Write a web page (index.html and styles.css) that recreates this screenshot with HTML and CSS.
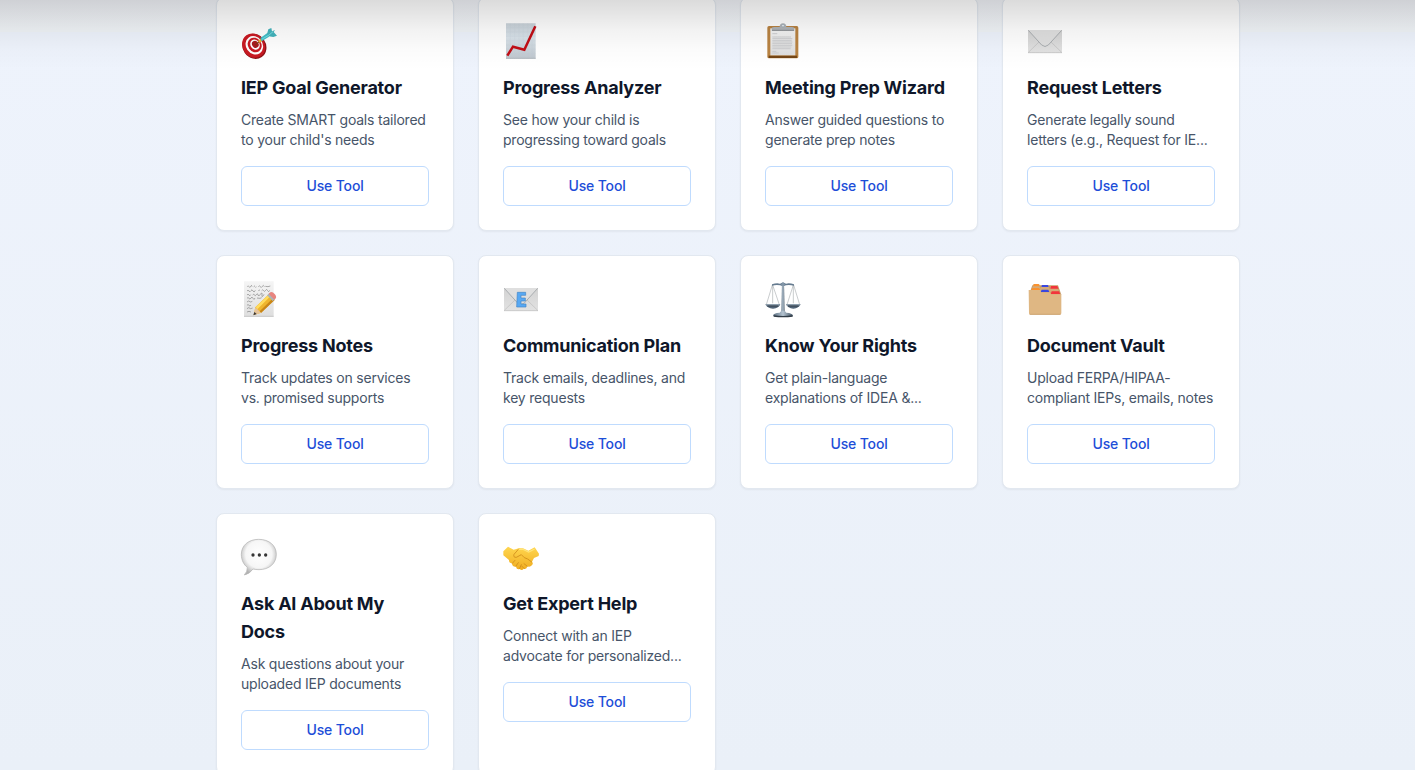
FILE: index.html
```html
<!DOCTYPE html>
<html lang="en">
<head>
<meta charset="utf-8">
<title>IEP Tools</title>
<link rel="stylesheet" href="styles.css">
</head>
<body>
<svg width="0" height="0" class="defs" aria-hidden="true">
  <defs>
    <linearGradient id="paper" x2="0" y2="1"><stop stop-color="#f5f5f5"/><stop offset="1" stop-color="#dedede"/></linearGradient>
    <linearGradient id="env" x2="0" y2="1"><stop stop-color="#d2d2d2"/><stop offset="1" stop-color="#e2e2e2"/></linearGradient>
    <linearGradient id="chart" x2="0" y2="1"><stop stop-color="#cad3da"/><stop offset=".4" stop-color="#d9e3ea"/><stop offset="1" stop-color="#bfc7ce"/></linearGradient>
    <linearGradient id="steel"><stop stop-color="#586c7e"/><stop offset=".5" stop-color="#b4c3d0"/><stop offset="1" stop-color="#435464"/></linearGradient>
    <radialGradient id="bubble" cx=".5" cy=".42" r=".58"><stop stop-color="#fff"/><stop offset=".65" stop-color="#f6f6f6"/><stop offset="1" stop-color="#b2b2b2"/></radialGradient>
    <linearGradient id="hand" x2="0" y2="1"><stop stop-color="#ffd64f"/><stop offset="1" stop-color="#f0ad20"/></linearGradient>
    <g id="envelope">
      <path d="M36 45H138V113H36Z" fill="url(#env)"/>
      <path d="M37 112L71 79M137 112L103 79" stroke="#bdbdbd" stroke-width="2" fill="none"/>
      <path d="M36 45H138L97 91Q87 99 77 91Z" fill="#dfdfdf"/>
      <path d="M37 46L77 90Q87 99 97 90L137 46" stroke="#a9adb0" stroke-width="3" fill="none"/>
      <path d="M36 113H138" stroke="#bababa" stroke-width="2"/>
    </g>
  </defs>
</svg>
<main class="page">
  <section class="tools">
    <article class="card">
      <svg class="icon" viewBox="33 21 108 120">
        <ellipse cx="73" cy="94" rx="35" ry="39" fill="#8f1218" transform="rotate(-35 73 94)"/>
        <ellipse cx="71" cy="92" rx="33" ry="38" fill="#c91922" transform="rotate(-35 71 92)"/>
        <ellipse cx="73" cy="91" rx="25" ry="29" fill="#fff" transform="rotate(-35 73 91)"/>
        <ellipse cx="74" cy="90" rx="20" ry="23" fill="#c91922" transform="rotate(-35 74 90)"/>
        <ellipse cx="75" cy="89" rx="13.5" ry="16" fill="#fff" transform="rotate(-35 75 89)"/>
        <ellipse cx="76" cy="88" rx="9.5" ry="11" fill="#a91c1e" transform="rotate(-35 76 88)"/>
        <path d="M76 89L94 76" stroke="#73430f" stroke-width="3"/>
        <path d="M84 77L92 72L96 79L88 83Z" fill="#e8b82d"/>
        <path d="M91 69L112 54L119 60L116 66L95 79Z" fill="#42bfc8"/>
        <path d="M111 57L115 43L124 39L126 49L135 45L131 51L141 62L130 66L116 64Z" fill="#43b3bc"/>
        <path d="M95 73L117 60L129 50" stroke="#76dce1" stroke-width="3" fill="none"/>
      </svg>
      <h3>IEP Goal Generator</h3>
      <p>Create SMART goals tailored<br>to your child's needs</p>
      <button>Use Tool</button>
    </article>
    <article class="card">
      <svg class="icon" viewBox="33 21 108 120">
        <path d="M42 25H131V131H42Z" fill="url(#chart)"/>
        <path d="M55 25V131M68 25V131M81 25V131M94 25V131M107 25V131M120 25V131M42 38H131M42 51H131M42 64H131M42 77H131M42 90H131M42 103H131M42 116H131" stroke="#bfcbd4" opacity=".55"/>
        <path d="M42 130H131" stroke="#a7afb5" stroke-width="2"/>
        <path d="M46 122L63 95L97 104L130 34" stroke="#c20d15" stroke-width="7.5" fill="none"/>
      </svg>
      <h3>Progress Analyzer</h3>
      <p>See how your child is<br>progressing toward goals</p>
      <button>Use Tool</button>
    </article>
    <article class="card">
      <svg class="icon" viewBox="33 21 108 120">
        <rect x="40" y="33" width="93" height="97" rx="5" fill="#b98342"/>
        <path d="M44 122H129V129H44Z" fill="#754615"/>
        <path d="M49 40H124V121H49Z" fill="url(#paper)"/>
        <path d="M55 56H70M55 66H111M55 71H115M55 76H113M55 81H115M55 86H114M55 91H115M55 96H112M55 101H110M55 109H67M55 114H74" stroke="#cccdcf" stroke-width="3"/>
        <path d="M53 47V40Q54 36 61 36H77Q77 25 87 25Q97 25 97 36H113Q120 36 121 40V47Z" fill="#afb3b7"/>
        <circle cx="87" cy="32" r="4" fill="#edf0f2" stroke="#94a5b3" stroke-width="2"/>
        <path d="M54 46H120" stroke="#8b8e92" stroke-width="3"/>
      </svg>
      <h3>Meeting Prep Wizard</h3>
      <p>Answer guided questions to<br>generate prep notes</p>
      <button>Use Tool</button>
    </article>
    <article class="card">
      <svg class="icon" viewBox="33 21 108 120"><use href="#envelope"/></svg>
      <h3>Request Letters</h3>
      <p>Generate legally sound<br>letters (e.g., Request for IE...</p>
      <button>Use Tool</button>
    </article>
    <article class="card">
      <svg class="icon" viewBox="33 21 108 120">
        <path d="M42 25H131V131H42Z" fill="url(#paper)"/>
        <path d="M42 130H131" stroke="#b9b9b9" stroke-width="2"/>
        <path d="M52 41q3-5 5 0t5-1 4 1M71 41q2-4 4 0t4 0M85 41q3-5 6 0t6-1 6 1M106 40l8 1 7-2M51 54q3-5 6 0t6-1 6 1 7-2M85 53q3-4 5 0M95 53q3-5 6 0t6-1 6 1 6-1M51 66q3-5 6 0t5-1M68 66q3-5 5 0t6-1 5 1 7-2 5 2 6-2M51 76q3-5 6 0t6-1 6 1 6-1M81 75l9 1 5-2M51 87l5-3 6 3 5-2M51 97q3-5 6 0t6-1M51 107l5-3 6 3 6-2M51 117l6-2 6 2" stroke="#777" stroke-width="1.8" fill="none"/>
        <path d="M71 126L76 103L117 63L134 80L93 119Z" fill="#efb52e"/>
        <path d="M77 103L117 64L122 69L82 109Z" fill="#ffdc5d"/>
        <path d="M89 115L129 76L134 81L93 120Z" fill="#c98617"/>
        <path d="M71 126L76 103L93 119Z" fill="#e6c49a"/>
        <path d="M70 127L73 117L80 123Z" fill="#393635"/>
        <path d="M111 67L119 60L136 77L128 84Z" fill="#adb4b5"/>
        <path d="M116 62L121 58Q127 55 134 63Q141 71 137 76L133 80Z" fill="#e8857f"/>
      </svg>
      <h3>Progress Notes</h3>
      <p>Track updates on services<br>vs. promised supports</p>
      <button>Use Tool</button>
    </article>
    <article class="card">
      <svg class="icon" viewBox="33 21 108 120">
        <use href="#envelope"/>
        <path d="M76 58H101V67H87V75H100V84H87V93H102V102H74Z" fill="#57a8f3" stroke="#4285c5" stroke-width="2"/>
      </svg>
      <h3>Communication Plan</h3>
      <p>Track emails, deadlines, and<br>key requests</p>
      <button>Use Tool</button>
    </article>
    <article class="card">
      <svg class="icon" viewBox="33 21 108 120">
        <path d="M55 36L37 95M56 36L76 95M118 36L99 95M119 36L137 95M56 36V91M118 36V91" stroke="#a5a9ad" stroke-width="1.8" fill="none"/>
        <path d="M54 34Q68 29 78 32L87 28L96 32Q106 29 120 34V38Q106 35 96 37L87 40L78 37Q66 35 54 38Z" fill="#657b90"/>
        <path d="M84 29H90L92 119H82Z" fill="url(#steel)"/>
        <circle cx="87" cy="34" r="5" fill="#8296a8"/>
        <path d="M34 94H79Q75 106 57 107Q39 106 34 94ZM96 94H140Q135 106 118 107Q101 106 96 94Z" fill="#526578"/>
        <path d="M36 96H77M98 96H138" stroke="#a2b4c3" stroke-width="3"/>
        <path d="M40 99H73M102 99H134" stroke="#323e49" stroke-width="3"/>
        <path d="M57 128Q58 120 77 119L82 113H92L97 119Q115 120 117 128Q87 135 57 128Z" fill="url(#steel)"/>
        <path d="M59 129Q87 133 116 129" stroke="#303b46" stroke-width="4" fill="none"/>
      </svg>
      <h3>Know Your Rights</h3>
      <p>Get plain-language<br>explanations of IDEA &amp;...</p>
      <button>Use Tool</button>
    </article>
    <article class="card">
      <svg class="icon" viewBox="33 21 108 120">
        <path d="M39 65L49 37H126L136 65Z" fill="#c69b65"/>
        <path d="M48 47L52 34H70L73 47L76 37H98L101 50L104 40H125L129 58H48Z" fill="#d5aa77"/>
        <path d="M51 40L54 33H68L71 40ZM46 51L49 45H69L73 51Z" fill="#fa922f"/>
        <path d="M76 42L78 36H96L98 42ZM74 57L77 50H97L100 57Z" fill="#3947df"/>
        <path d="M103 47L105 39H124L127 47ZM104 64L107 55H129L133 64Z" fill="#f2343b"/>
        <path d="M38 51H72L75 58H102L105 64H136V121Q136 125 131 125H43Q39 125 39 121Z" fill="#dfb783"/>
        <path d="M41 124H134" stroke="#c39a65" stroke-width="2"/>
      </svg>
      <h3>Document Vault</h3>
      <p>Upload FERPA/HIPAA-<br>compliant IEPs, emails, notes</p>
      <button>Use Tool</button>
    </article>
    <article class="card">
      <svg class="icon" viewBox="33 21 108 120">
        <path d="M86 25C117 25 139 43 139 70C139 98 117 116 87 116Q77 116 69 114Q59 129 43 132Q53 121 52 109C41 101 34 87 34 70C34 43 56 25 86 25Z" fill="url(#bubble)" stroke="#b1b1b1" stroke-width="2"/>
        <circle cx="69" cy="72" r="5" fill="#363636"/><circle cx="88" cy="72" r="5" fill="#363636"/><circle cx="107" cy="72" r="5" fill="#363636"/>
      </svg>
      <h3>Ask AI About My<br>Docs</h3>
      <p>Ask questions about your<br>uploaded IEP documents</p>
      <button>Use Tool</button>
    </article>
    <article class="card">
      <svg class="icon" viewBox="33 21 108 120">
        <path d="M34 61L48 47L65 56L80 52L93 52L109 59L128 49L141 68L140 75L126 81L120 92Q126 99 118 104Q112 109 106 106Q104 116 95 113Q90 120 83 114Q74 117 72 107Q60 108 60 97Q50 96 51 87L34 73Z" fill="url(#hand)"/>
        <path d="M80 54L66 70Q63 80 73 79L88 71Q96 82 107 84L119 93M61 97L69 88M72 105L79 95M83 112L88 101M96 98L106 106M89 105L96 112" stroke="#cf8c1a" stroke-width="2.5" fill="none" stroke-linecap="round"/>
        <path d="M80 55L94 55L110 63L128 54" stroke="#ffe479" stroke-width="4" fill="none"/>
      </svg>
      <h3>Get Expert Help</h3>
      <p>Connect with an IEP<br>advocate for personalized...</p>
      <button>Use Tool</button>
    </article>
  </section>
  <div class="top-shade"></div>
</main>
</body>
</html>
```
FILE: styles.css
```css
* { box-sizing: border-box; }
body { margin: 0; overflow: hidden; font-family: Inter, "Liberation Sans", sans-serif; }
.defs { position: absolute; }
.page {
  display: flow-root;
  position: relative;
  height: 770px;
  overflow: hidden;
  padding-left: 216px;
  background: linear-gradient(#f1f3f8, #f0f4f7 32px, #eef3fc 32px, #eaf0f8);
}
.tools {
  display: grid;
  grid-template-columns: repeat(4, 238px);
  gap: 24px;
  margin-top: -3px;
}
.card {
  min-height: 234px;
  padding: 24px;
  border: 1px solid #e2e8f0;
  border-radius: 8px;
  background: #fff;
  box-shadow: 0 1px 2px rgba(0, 0, 0, .05);
}
.icon { display: block; width: 36px; height: 40px; margin-bottom: 12px; overflow: visible; }
h3 { margin: 0 0 8px; color: #0f172a; font-size: 18px; font-weight: 650; line-height: 28px; letter-spacing: -.22px; white-space: nowrap; }
p { margin: 0 0 16px; color: #475569; font-size: 14px; line-height: 20px; letter-spacing: -.21px; white-space: nowrap; }
button {
  display: block;
  width: 100%;
  height: 40px;
  padding: 0;
  border: 1px solid #bfdbfe;
  border-radius: 6px;
  background: #fff;
  color: #1d4ed8;
  font: 500 14px/20px Inter, "Liberation Sans", sans-serif;
  letter-spacing: -.15px;
}
.top-shade {
  position: absolute;
  inset: 0 0 auto;
  height: 70px;
  pointer-events: none;
  background: linear-gradient(rgba(0,0,0,.14), rgba(0,0,0,.105) 12px, rgba(0,0,0,.05) 30px, rgba(0,0,0,.015) 50px, transparent);
}
```
